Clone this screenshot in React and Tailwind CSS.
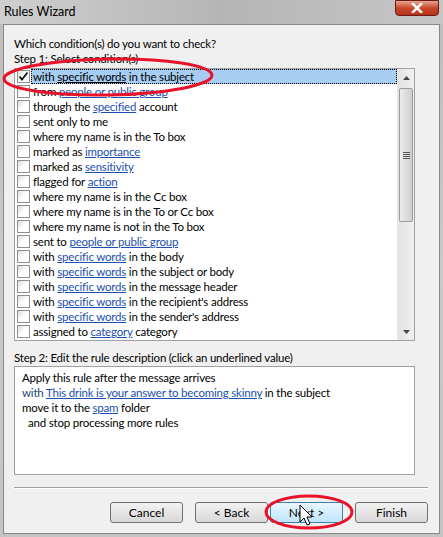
import React from "react";

// Rules Wizard (Outlook, Windows 7 look)
const CONDITIONS = [
  ["with ", "specific words", " in the subject"],
  ["from ", "people or public group", ""],
  ["through the ", "specified", " account"],
  ["sent only to me"],
  ["where my name is in the To box"],
  ["marked as ", "importance", ""],
  ["marked as ", "sensitivity", ""],
  ["flagged for ", "action", ""],
  ["where my name is in the Cc box"],
  ["where my name is in the To or Cc box"],
  ["where my name is not in the To box"],
  ["sent to ", "people or public group", ""],
  ["with ", "specific words", " in the body"],
  ["with ", "specific words", " in the subject or body"],
  ["with ", "specific words", " in the message header"],
  ["with ", "specific words", " in the recipient's address"],
  ["with ", "specific words", " in the sender's address"],
  ["assigned to ", "category", " category"],
];

function Link({ children, plain }) {
  return (
    <span className={`underline underline-offset-[1px] ${plain ? "text-black" : "text-[#1b4fb0]"}`}>
      {children}
    </span>
  );
}

function Checkbox({ checked }) {
  return (
    <div className="w-[13px] h-[13px] border border-[#8e8f8f] bg-gradient-to-br from-[#dcdcdc] via-white to-white flex items-center justify-center shrink-0">
      {checked && (
        <svg width="11" height="11" viewBox="0 0 11 11">
          <path d="M1.5 5.5 L4 8.5 L9.5 1.5" fill="none" stroke="#111" strokeWidth="1.8" />
        </svg>
      )}
    </div>
  );
}

function ConditionRow({ parts, selected }) {
  const [a, link, b] = parts;
  return (
    <div className="h-[15px] flex items-center pl-[2px]">
      <Checkbox checked={selected} />
      <div
        className={`ml-[1px] h-[15px] leading-[13px] pl-[1px] flex-1 whitespace-pre ${
          selected ? "bg-[#a8cdf2] border border-dotted border-black" : "border border-transparent"
        }`}
      >
        <span>{a}</span>
        {link && <Link plain={selected}>{link}</Link>}
        {b && <span>{b}</span>}
      </div>
    </div>
  );
}

function Button({ children, active }) {
  return (
    <div
      className={`w-[73px] h-[21px] rounded-[3px] border flex items-center justify-center ${
        active
          ? "border-[#3c7fb1] bg-gradient-to-b from-[#eaf6fd] to-[#bee6fd]"
          : "border-[#707070] bg-gradient-to-b from-[#f2f2f2] to-[#d9d9d9]"
      }`}
    >
      {children}
    </div>
  );
}

function Scrollbar() {
  return (
    <div className="w-[17px] flex flex-col bg-gradient-to-r from-[#e3e3e3] to-[#f0f0f0] border-l border-[#e6e6e6]">
      <div className="h-[17px] flex items-center justify-center">
        <svg width="7" height="4" viewBox="0 0 7 4">
          <path d="M0 4 L3.5 0 L7 4 Z" fill="#444" />
        </svg>
      </div>
      <div className="mt-[2px] h-[134px] mx-[1px] rounded-[2px] border border-[#9a9a9a] bg-gradient-to-r from-[#ececec] via-[#dedede] to-[#cfcfcf] flex items-center justify-center">
        <div className="flex flex-col gap-[1px]">
          <div className="w-[7px] h-[1px] bg-[#555]" />
          <div className="w-[7px] h-[1px] bg-[#555]" />
          <div className="w-[7px] h-[1px] bg-[#555]" />
          <div className="w-[7px] h-[1px] bg-[#555]" />
        </div>
      </div>
      <div className="flex-1" />
      <div className="h-[17px] flex items-center justify-center">
        <svg width="7" height="4" viewBox="0 0 7 4">
          <path d="M0 0 L7 0 L3.5 4 Z" fill="#444" />
        </svg>
      </div>
    </div>
  );
}

export default function App() {
  return (
    <div
      className="relative w-[443px] h-[537px] overflow-hidden bg-gradient-to-b from-[#bdbdbd] via-[#c9c9c9] to-[#c4c4c4] text-black"
      style={{ fontFamily: 'Lato, "Noto Sans", Arial, sans-serif' }}
    >
      {/* Title bar */}
      <div className="h-[24px] flex items-center pl-[4px] text-[12.5px] bg-gradient-to-r from-[#cfcfcf] via-[#b5b5b5] to-[#c6c6c6]">
        Rules Wizard
      </div>
      <div className="absolute right-[4px] top-0 w-[44px] h-[16px] rounded-b-[4px] border border-[#6b1d14] bg-gradient-to-b from-[#e8a493] via-[#c9462c] to-[#b8321c] flex items-center justify-center">
        <svg width="12" height="10" viewBox="0 0 12 10">
          <path d="M2 1 L10 9 M10 1 L2 9" stroke="white" strokeWidth="2.6" strokeLinecap="square" />
        </svg>
      </div>

      {/* Client area */}
      <div className="mx-[3px] h-[510px] border border-[#888] bg-[#f0f0f0] pl-[10px] pr-[10px] flex flex-col text-[11.5px] tracking-[-0.2px] leading-[15px]">
        <div className="mt-[11px]">Which condition(s) do you want to check?</div>
        <div>Step 1: Select condition(s)</div>

        <div className="mt-[2px] w-[401px] h-[273px] border border-[#a0a0a0] bg-white flex">
          <div className="flex-1 flex flex-col">
            {CONDITIONS.map((c, i) => (
              <ConditionRow key={i} parts={c} selected={i === 0} />
            ))}
          </div>
          <Scrollbar />
        </div>

        <div className="mt-[9px]">Step 2: Edit the rule description (click an underlined value)</div>
        <div className="mt-[1px] w-[401px] h-[109px] border border-[#a0a0a0] bg-white pl-[7px] pt-[3px] whitespace-pre">
          <div>Apply this rule after the message arrives</div>
          <div>
            <span className="text-[#1d3f73]">with </span>
            <Link>This drink is your answer to becoming skinny</Link>
            <span> in the subject</span>
          </div>
          <div>
            <span>move it to the </span>
            <Link>spam</Link>
            <span> folder</span>
          </div>
          <div className="pl-[6px]">and stop processing more rules</div>
        </div>

        <div className="mt-[12px] w-[414px] h-[2px] border-t border-[#a0a0a0] border-b border-b-white" />

        <div className="mt-[13px] flex justify-end gap-[12px] w-[414px] text-[12px] tracking-normal">
          <Button>Cancel</Button>
          <div className="flex gap-[2px]">
            <Button>&lt; Back</Button>
            <Button active>Next &gt;</Button>
          </div>
          <Button>Finish</Button>
        </div>
      </div>

      {/* Annotation overlay: red ellipses and mouse pointer */}
      <svg className="absolute left-0 top-0 pointer-events-none" width="443" height="537" viewBox="0 0 443 537">
        <ellipse cx="108" cy="77" rx="104" ry="18" fill="none" stroke="#e8132a" strokeWidth="3" transform="rotate(-1 108 77)" />
        <ellipse cx="309" cy="512" rx="43" ry="16" fill="none" stroke="#e8132a" strokeWidth="3" />
        <path d="M300 505 L300 522 L304 518 L307 525 L310 524 L307 517 L312 517 Z" fill="white" stroke="black" strokeWidth="1" />
      </svg>
    </div>
  );
}
